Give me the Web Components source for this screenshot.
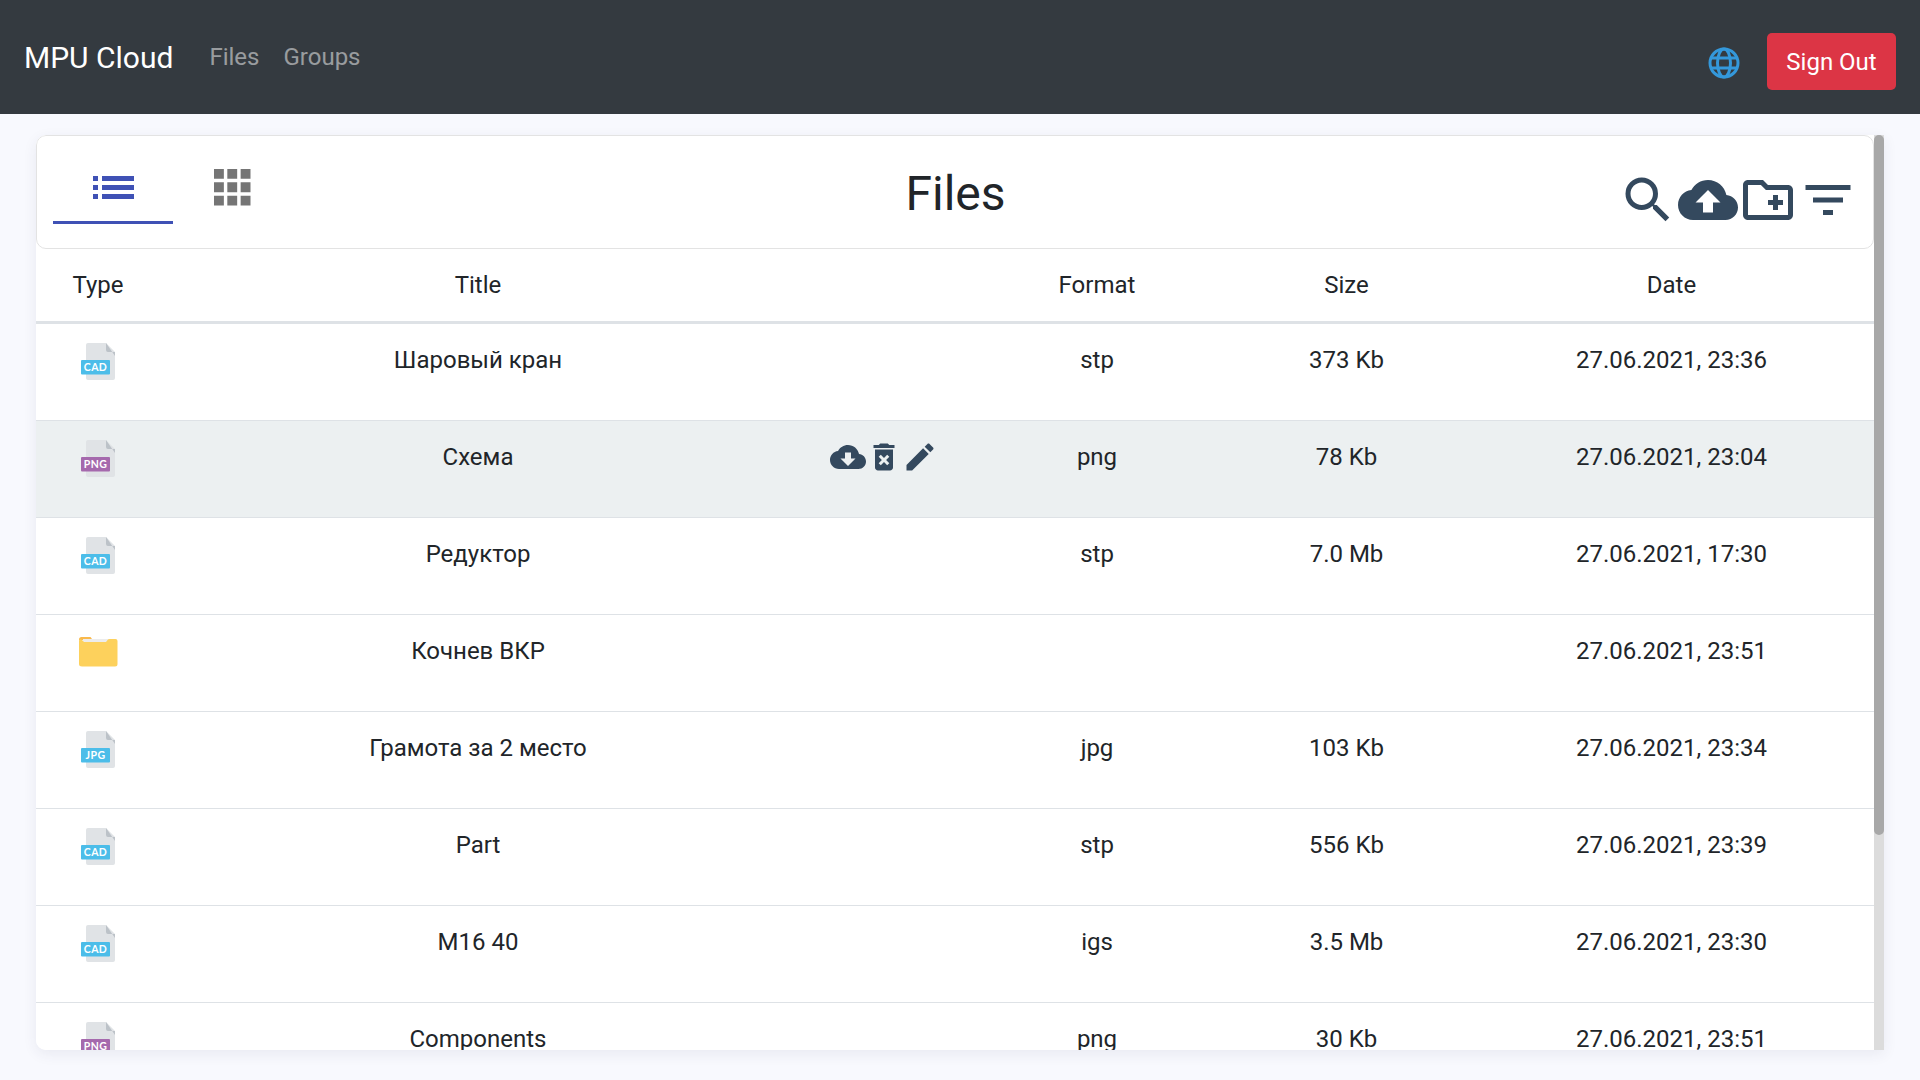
<!DOCTYPE html>
<html lang="ru"><head><meta charset="utf-8"><title>MPU Cloud</title>
<style>
html,body{margin:0;height:100%;overflow:hidden;background:#f8f9fe;font-family:Roboto,"Liberation Sans",sans-serif;color:#212529;font-size:24px;line-height:1.5}
</style></head><body>
<app-shell>
  <app-nav></app-nav>
  <file-card>
    <file-toolbar></file-toolbar>
    <file-head></file-head>
    <file-row kind="cad" name="Шаровый кран" format="stp" size="373 Kb" date="27.06.2021, 23:36"></file-row>
    <file-row kind="png" name="Схема" format="png" size="78 Kb" date="27.06.2021, 23:04" active></file-row>
    <file-row kind="cad" name="Редуктор" format="stp" size="7.0 Mb" date="27.06.2021, 17:30"></file-row>
    <file-row kind="folder" name="Кочнев ВКР" format="" size="" date="27.06.2021, 23:51"></file-row>
    <file-row kind="jpg" name="Грамота за 2 место" format="jpg" size="103 Kb" date="27.06.2021, 23:34"></file-row>
    <file-row kind="cad" name="Part" format="stp" size="556 Kb" date="27.06.2021, 23:39"></file-row>
    <file-row kind="cad" name="M16 40" format="igs" size="3.5 Mb" date="27.06.2021, 23:30"></file-row>
    <file-row kind="png" name="Components" format="png" size="30 Kb" date="27.06.2021, 23:51"></file-row>
  </file-card>
</app-shell>
<script>
const COLS='124px 636px 174px 254px 245px 405px';
const I={
 search:'M15.5 14h-.79l-.28-.27A6.471 6.471 0 0 0 16 9.5 6.5 6.5 0 1 0 9.5 16c1.61 0 3.09-.59 4.23-1.57l.27.28v.79l5 4.99L20.49 19l-4.99-5zm-6 0C7.01 14 5 11.99 5 9.5S7.01 5 9.5 5 14 7.01 14 9.5 11.99 14 9.5 14z',
 up:'M19.35 10.04C18.67 6.59 15.64 4 12 4 9.11 4 6.6 5.64 5.35 8.04 2.34 8.36 0 10.91 0 14c0 3.31 2.69 6 6 6h13c2.76 0 5-2.24 5-5 0-2.64-2.05-4.78-4.65-4.96zM14 13v4h-4v-4H7l5-5 5 5h-3z',
 newf:'M20 6h-8l-2-2H4c-1.11 0-1.99.89-1.99 2L2 18c0 1.11.89 2 2 2h16c1.11 0 2-.89 2-2V8c0-1.11-.89-2-2-2zm0 12H4V6h5.17l2 2H20v10zm-8-4h2v2h2v-2h2v-2h-2v-2h-2v2h-2z',
 filter:'M10 18h4v-2h-4v2zM3 6v2h18V6H3zm3 7h12v-2H6v2z',
 down:'M19.35 10.04C18.67 6.59 15.64 4 12 4 9.11 4 6.6 5.64 5.35 8.04 2.34 8.36 0 10.91 0 14c0 3.31 2.69 6 6 6h13c2.76 0 5-2.24 5-5 0-2.64-2.05-4.78-4.65-4.96zM17 13l-5 5-5-5h3V9h4v4h3z',
 del:'M6 19c0 1.1.9 2 2 2h8c1.1 0 2-.9 2-2V7H6v12zm2.46-7.12l1.41-1.41L12 12.59l2.12-2.12 1.41 1.41L13.41 14l2.12 2.12-1.41 1.41L12 15.41l-2.12 2.12-1.41-1.41L10.59 14l-2.13-2.12zM15.5 4l-1-1h-5l-1 1H5v2h14V4z',
 edit:'M3 17.25V21h3.75L17.81 9.94l-3.75-3.75L3 17.25zM20.71 7.04c.39-.39.39-1.02 0-1.41l-2.34-2.34c-.39-.39-1.02-.39-1.41 0l-1.83 1.83 3.75 3.75 1.83-1.83z'
};
const icon=(p,s)=>`<svg width="${s}" height="${s}" viewBox="0 0 24 24" fill="#34495e" style="display:block;flex:none"><path d="${p}"/></svg>`;
class Base extends HTMLElement{
  constructor(){super();this.attachShadow({mode:'open'})}
  render(h){this.shadowRoot.innerHTML=h}
}
customElements.define('app-shell',class extends Base{connectedCallback(){this.render(`<style>
:host{display:flex;flex-direction:column;height:1080px}
</style><slot></slot>`);
 }});
customElements.define('app-nav',class extends Base{connectedCallback(){this.render(`<style>
:host{display:flex;align-items:center;height:114px;padding:0 24px;box-sizing:border-box;background:#343a40;flex:none}
.brand{color:#fff;font-size:30px;line-height:45px;margin-right:36px}
.link{color:rgba(255,255,255,.5);margin-right:24px}
.right{margin-left:auto;display:flex;align-items:center;gap:27px;margin-top:9px}
button{font:inherit;color:#fff;background:#dc3545;border:0;border-radius:5px;width:129px;height:57px;padding:0}
svg{display:block;margin-top:3px}
</style>
<span class="brand">MPU Cloud</span><span class="link">Files</span><span class="link">Groups</span>
<div class="right">
<svg width="32" height="32" viewBox="0 0 32 32" fill="none" stroke="#3498db" stroke-width="3"><circle cx="16" cy="16" r="14"/><ellipse cx="16" cy="16" rx="6.5" ry="14"/><path d="M3.5 11h25M3.5 21h25"/></svg>
<button>Sign Out</button></div>`)}});
customElements.define('file-scrollbar',class extends Base{connectedCallback(){this.render(`<style>
:host{display:block;flex:none;width:10px;background:#dcdcdc}
.thumb{height:700px;background:#a8a8a8;border-radius:5px}
</style><div class="thumb"></div>`)}});
customElements.define('file-card',class extends Base{connectedCallback(){this.render(`<style>
:host{display:flex;margin:21px 36px 0;height:915px;background:#fff;border-radius:10px 0 0 10px;box-shadow:0 4px 14px rgba(50,50,93,.08);overflow:hidden;flex:none}
.scroll{flex:1;min-width:0;overflow:hidden}
</style><div class="scroll"><slot></slot></div><file-scrollbar></file-scrollbar>`)}});
customElements.define('file-toolbar',class extends Base{connectedCallback(){this.render(`<style>
:host{display:grid;grid-template-columns:1fr auto 1fr;align-items:start;height:114px;box-sizing:border-box;border:1px solid #e3e3e3;border-radius:10px;background:#fff;padding:0 15px 0 16px}
.tabs{display:flex}
.tab{width:120px;height:88px;box-sizing:border-box;display:flex;justify-content:center;padding-top:33px}
.tab.on{border-bottom:3px solid #3f51b5}
.tab.off svg{margin-left:-1px}
h1{margin:0;font-size:48px;font-weight:400;line-height:72px;padding-top:22px;color:#212529}
.tools{display:flex;justify-self:end;padding-top:34px}
</style>
<div class="tabs">
<div class="tab on"><svg width="41" height="23" viewBox="0 0 41 23" fill="#3f51b5" style="margin-top:7px"><path d="M0 0h5v5H0zM9 0h32v5H9zM0 9h5v5H0zM9 9h32v5H9zM0 18h5v5H0zM9 18h32v5H9z"/></svg></div>
<div class="tab off"><svg width="36.500" height="36.500" viewBox="0 0 37 37" fill="#757575"><path d="M0 0h10v10H0zM13.500 0h10v10h-10zM27 0h10v10H27zM0 13.500h10v10H0zM13.500 13.500h10v10h-10zM27 13.500h10v10H27zM0 27h10v10H0zM13.500 27h10v10h-10zM27 27h10v10H27z"/></svg></div>
</div>
<h1>Files</h1>
<div class="tools">${icon(I.search,60)}${icon(I.up,60)}${icon(I.newf,60)}${icon(I.filter,60)}</div>`)}});
customElements.define('file-head',class extends Base{connectedCallback(){this.render(`<style>
:host{display:grid;grid-template-columns:${COLS};height:75px;box-sizing:border-box;border-bottom:3px solid #dee2e6;text-align:center;align-items:center}
</style><div>Type</div><div>Title</div><div></div><div>Format</div><div>Size</div><div>Date</div>`)}});
function fileIcon(kind){
 if(kind==='folder')return `<svg width="40" height="40" viewBox="0 -1 40 40" style="display:block"><path d="M1 6.500q0-2.500 2.500-2.500h9l3 4H39v-1H1z" fill="#f9b94d"/><path d="M5 6h28v6H5z" fill="#ececec"/><path d="M1 8q0-3 3-1l2 2h22l2-2.500q.5-.5 1.500-.5h6q2 0 2 2v23q0 2.500-2.500 2.500h-33Q1 33.500 1 31z" fill="#fdd15c"/></svg>`;
 const c=kind==='png'?'#a569ad':'#4cbde9', t=kind.toUpperCase();
 return `<svg width="40" height="40" viewBox="0 0 40 40" style="display:block"><path d="M10 2q-2 0-2 2v33q0 2 2 2h25q2 0 2-2V11l-9-9z" fill="#e0e3e6"/><path d="M28 2l9 9v4z M28 2v7q0 2 2 2h7z" fill="#bcc2c8"/><rect x="3" y="19" width="29" height="14.500" rx="1" fill="${c}"/><text x="17.500" y="30.200" text-anchor="middle" letter-spacing=".4" font-family="Lato,'Open Sans',sans-serif" font-size="10.500" font-weight="700" fill="#fff">${t}</text></svg>`;
}
customElements.define('file-row',class extends Base{connectedCallback(){
 const a=n=>this.getAttribute(n)||'';
 const acts=this.hasAttribute('active')?`<div class="acts">${icon(I.down,36)}${icon(I.del,36)}${icon(I.edit,36)}</div>`:'';
 this.render(`<style>
:host{display:grid;grid-template-columns:${COLS};height:97px;box-sizing:border-box;border-bottom:1px solid #dee2e6;text-align:center;align-items:start;background:${this.hasAttribute('active')?'#ecf0f1':'#fff'}}
.c{padding-top:18px}
.t{display:flex;justify-content:center;padding-top:17px}
.acts{display:flex;justify-content:center;padding-top:18px;margin-left:1px}
</style><div class="t">${fileIcon(a('kind'))}</div><div class="c">${a('name')}</div><div>${acts}</div><div class="c">${a('format')}</div><div class="c">${a('size')}</div><div class="c">${a('date')}</div>`)}});
</script>
</body></html>
